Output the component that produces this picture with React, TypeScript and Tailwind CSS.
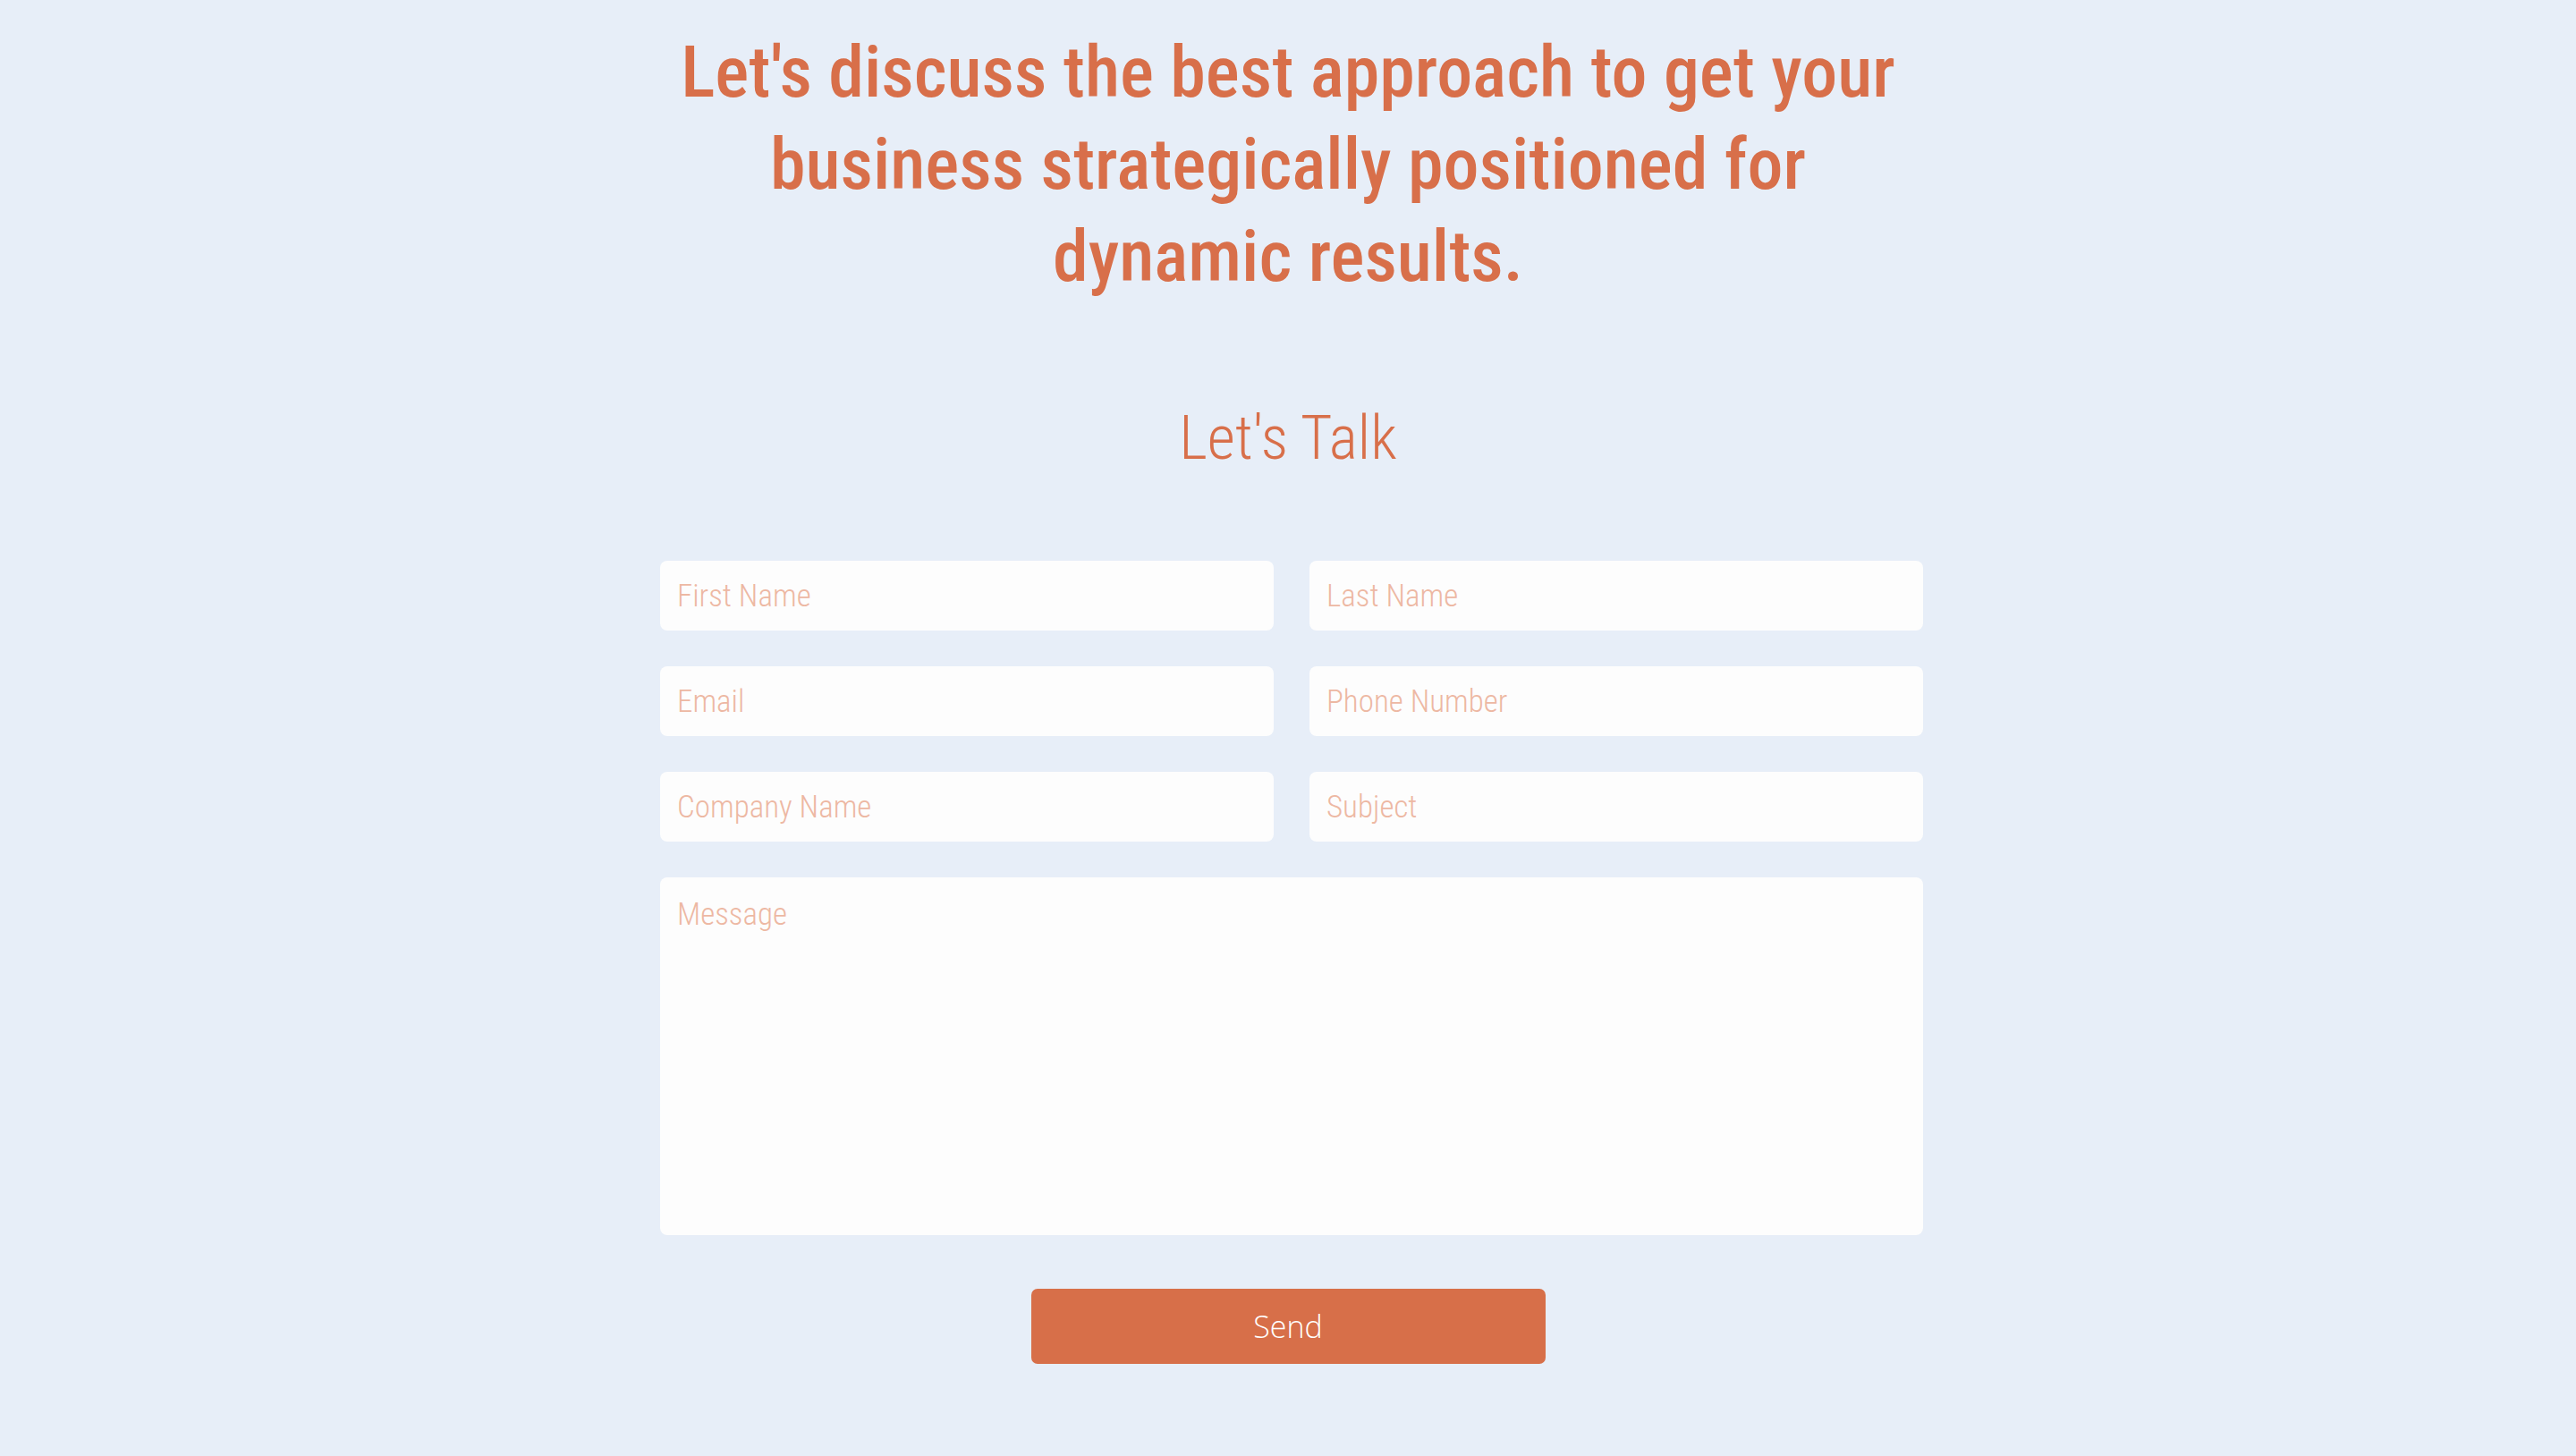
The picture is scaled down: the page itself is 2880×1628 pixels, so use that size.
import React from "react";

const fields: { ph: string }[] = [
  { ph: "First Name" },
  { ph: "Last Name" },
  { ph: "Email" },
  { ph: "Phone Number" },
  { ph: "Company Name" },
  { ph: "Subject" },
];

export default function App() {
  return (
    <div className="flex min-h-screen w-full flex-col items-center bg-[#e7eef8] pt-[30px] font-['Roboto_Condensed','Roboto',sans-serif]">
      <h1 className="text-center text-[80px] font-medium leading-[103px] text-[#d86f4a]">
        Let's discuss the best approach to get your
        <br />
        business strategically positioned for
        <br />
        dynamic results.
      </h1>
      <h2 className="mt-[111px] text-center text-[68px] font-light leading-[80px] text-[#d86f4a]">
        Let's Talk
      </h2>
      <form
        className="mt-[97px] ml-[8px] grid w-[1412px] grid-cols-2 gap-x-[40px] gap-y-[40px]"
        onSubmit={(e) => e.preventDefault()}
      >
        {fields.map((f) => (
          <input
            key={f.ph}
            placeholder={f.ph}
            className="h-[78px] w-full rounded-[8px] bg-[#fdfdfd] px-[19px] font-['Roboto_Condensed','Roboto',sans-serif] text-[35px] font-light text-[#d86f4a] outline-none placeholder:text-[#edb8a3]"
          />
        ))}
        <textarea
          placeholder="Message"
          className="col-span-2 h-[400px] w-full resize-none rounded-[8px] bg-[#fdfdfd] px-[19px] pt-[22px] font-['Roboto_Condensed','Roboto',sans-serif] text-[35px] leading-[40px] font-light text-[#d86f4a] outline-none placeholder:text-[#edb8a3]"
        />
      </form>
      <button
        type="button"
        className="mt-[60px] h-[84px] w-[575px] rounded-[7px] bg-[#d76f49] font-['Open_Sans','Noto_Sans',sans-serif] text-[34px] font-light text-white"
      >
        Send
      </button>
    </div>
  );
}
